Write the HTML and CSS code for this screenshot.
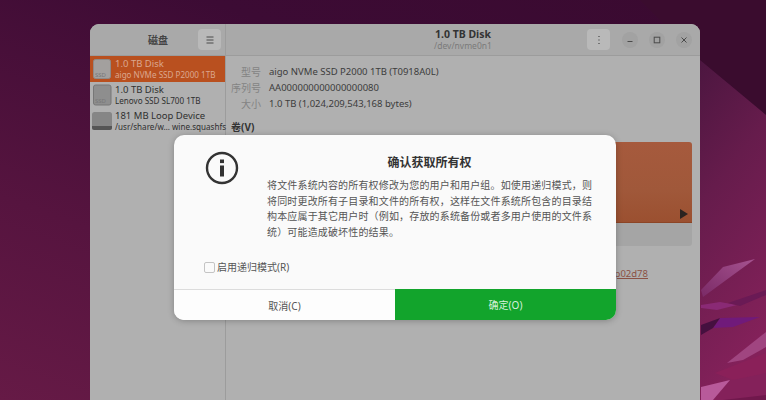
FILE: index.html
```html
<!DOCTYPE html>
<html lang="zh-CN">
<head>
<meta charset="utf-8">
<title>磁盘</title>
<link rel="stylesheet" href="styles.css">
</head>
<body>
<svg class="wallpaper" width="766" height="400" viewBox="0 0 766 400">
  <defs>
    <linearGradient id="rightBase" x1="0" y1="0" x2="0.25" y2="1">
      <stop offset="0" stop-color="#4c1640"/>
      <stop offset=".4" stop-color="#661c4c"/>
      <stop offset="1" stop-color="#84215a"/>
    </linearGradient>
    <linearGradient id="streak" x1="0" y1="1" x2="1" y2="0">
      <stop offset="0" stop-color="#7a2a66"/>
      <stop offset="1" stop-color="#a65390"/>
    </linearGradient>
  </defs>
  <polygon points="640,0 766,0 766,115 700,60" fill="#3a0c2e"/>
  <polygon points="700,60 766,115 766,400 700,400" fill="url(#rightBase)"/>
  <polygon points="701,290 723,267 755,259 733,275 703,297" fill="url(#streak)"/>
  <polygon points="701,305 720,302 737,305 717,310 701,308" fill="#8a2a75"/>
  <polygon points="728,303 766,290 766,295 740,306" fill="#6a1a55"/>
  <polygon points="720,318 760,317 733,327 713,328" fill="#701a7a"/>
  <polygon points="701,325 720,318 713,328 701,335" fill="#45103f"/>
  <polygon points="727,363 766,332 766,347 743,360" fill="#a04580"/>
  <polygon points="715,373 766,353 766,373 733,380" fill="#8a2059"/>
  <polygon points="701,387 730,380 713,400 701,400" fill="#b85a9a"/>
  <polygon points="723,400 766,395 766,400" fill="#70184c"/>
</svg>
<main class="window">
  <header class="titlebar">
    <div class="side-head">
      <span class="side-title">磁盘</span>
      <button class="tool-btn" aria-label="菜单">
        <svg width="10" height="8" viewBox="0 0 10 8"><path d="M1.5 1h7M1.5 4h7M1.5 7h7" stroke="#4a4a4a" stroke-width="1"/></svg>
      </button>
    </div>
    <div class="main-head">
      <div class="head-title"><strong>1.0 TB Disk</strong><span>/dev/nvme0n1</span></div>
      <button class="tool-btn kebab" aria-label="更多">
        <svg width="4" height="10" viewBox="0 0 4 10"><path d="M2 1v1M2 4.5v1M2 8v1" stroke="#444" stroke-width="1.2"/></svg>
      </button>
      <div class="win-ctrls">
        <span class="ctrl"><svg width="8" height="8" viewBox="0 0 8 8"><path d="M1.5 5.5h5" stroke="#4a4a4a" stroke-width="1"/></svg></span>
        <span class="ctrl"><svg width="8" height="8" viewBox="0 0 8 8"><rect x="1.2" y="1.2" width="5.6" height="5.6" fill="none" stroke="#4a4a4a" stroke-width="1"/></svg></span>
        <span class="ctrl"><svg width="8" height="8" viewBox="0 0 8 8"><path d="M1.5 1.5l5 5M6.5 1.5l-5 5" stroke="#4a4a4a" stroke-width="1"/></svg></span>
      </div>
    </div>
  </header>
  <div class="body">
    <aside class="sidebar">
      <div class="disk selected">
        <svg class="disk-icon" width="20" height="22" viewBox="0 0 20 22"><rect x="1.5" y="1.5" width="17" height="19" rx="2" fill="#a3a09e" stroke="#8f8a88"/><text x="3" y="19" class="ssd">SSD</text></svg>
        <div class="disk-text"><b>1.0 TB Disk</b><small>aigo NVMe SSD P2000 1TB</small></div>
      </div>
      <div class="disk">
        <svg class="disk-icon" width="20" height="22" viewBox="0 0 20 22"><rect x="1.5" y="1" width="17.5" height="20" rx="2" fill="#8e8e8e" stroke="#777"/><text x="3" y="19" class="ssd">SSD</text></svg>
        <div class="disk-text"><b>1.0 TB Disk</b><small>Lenovo SSD SL700 1TB</small></div>
      </div>
      <div class="disk">
        <svg class="disk-icon" width="20" height="22" viewBox="0 0 20 22"><rect x="0" y="2" width="20" height="18" rx="2.5" fill="#868686"/><path d="M0 16h20v1.5a2.5 2.5 0 0 1-2.5 2.5h-15A2.5 2.5 0 0 1 0 17.500z" fill="#555"/></svg>
        <div class="disk-text"><b>181 MB Loop Device</b><small>/usr/share/w… wine.squashfs</small></div>
      </div>
    </aside>
    <section class="content">
      <dl class="info">
        <dt>型号</dt><dd>aigo NVMe SSD P2000 1TB (T0918A0L)</dd>
        <dt>序列号</dt><dd>AA000000000000000080</dd>
        <dt>大小</dt><dd>1.0 TB (1,024,209,543,168 bytes)</dd>
      </dl>
      <h2 class="vol-head">卷(V)</h2>
      <div class="volume">
        <div class="vol-part"><svg width="9" height="10" viewBox="0 0 9 10"><path d="M1 0l8 5-8 5z" fill="#2c2320"/></svg></div>
        <div class="vol-tools"></div>
      </div>
      <div class="link-row"><a>/dev/disk/by-uuid/0f3a6c2e-71b4-4d19-a8e5-p02d78</a></div>
    </section>
  </div>
</main>
<div class="dialog" role="dialog">
  <div class="dlg-main">
    <svg class="dlg-icon" width="34" height="34" viewBox="0 0 34 34">
      <circle cx="17" cy="17" r="15" fill="none" stroke="#333" stroke-width="2.4"/>
      <rect x="15" y="14.500" width="4" height="11" fill="#333"/>
      <rect x="15" y="8.500" width="4" height="3.600" fill="#333"/>
    </svg>
    <div class="dlg-copy">
      <h1>确认获取所有权</h1>
      <p>将文件系统内容的所有权修改为您的用户和用户组。如使用递归模式，则<br>将同时更改所有子目录和文件的所有权，这样在文件系统所包含的目录结<br>构本应属于其它用户时（例如，存放的系统备份或者多用户使用的文件系<br>统）可能造成破坏性的结果。</p>
    </div>
  </div>
  <label class="check"><span class="box"></span>启用递归模式(R)</label>
  <div class="dlg-actions">
    <button class="cancel">取消(C)</button>
    <button class="ok">确定(O)</button>
  </div>
</div>
</body>
</html>
```
FILE: styles.css
```css
* { box-sizing: border-box; }
html, body { margin: 0; height: 400px; overflow: hidden; }
body {
  position: relative;
  width: 766px;
  font-family: "Noto Sans", "Noto Sans CJK SC", sans-serif;
  background: linear-gradient(20deg, #661a46 0%, #56143f 30%, #3c0b34 70%, #3a0a30 100%);
}
.wallpaper { position: absolute; left: 0; top: 0; }
.window {
  position: absolute;
  left: 90px;
  top: 24px;
  width: 610px;
  height: 376px;
  border-radius: 9px 9px 0 0;
  background: #b0b0b0;
  overflow: hidden;
  display: flex;
  flex-direction: column;
}
.titlebar { display: flex; height: 32px; flex: none; background: #a9a9a9; border-bottom: 1px solid #9c9c9c; }
.side-head { width: 136px; flex: none; display: flex; align-items: center; border-right: 1px solid #9c9c9c; padding: 0 4px 0 0; }
.side-title { flex: 1; text-align: center; font-size: 10px; font-weight: 700; color: #444; padding-left: 28px; }
.tool-btn {
  width: 23px; height: 21px; padding: 0; border: 0; border-radius: 4px;
  background: #b9b9b9; display: flex; align-items: center; justify-content: center;
}
.main-head { flex: 1; display: flex; align-items: center; padding-right: 8px; position: relative; }
.head-title { position: absolute; left: 0; right: 0; text-align: center; display: flex; flex-direction: column; line-height: 11px; }
.head-title strong { font-size: 10.5px; color: #333; }
.head-title span { font-size: 8.5px; color: #7a7a7a; }
.kebab { margin-left: auto; position: relative; margin-right: 12px; }
.win-ctrls { display: flex; gap: 11px; position: relative; }
.ctrl { width: 16px; height: 16px; border-radius: 50%; background: #a2a2a2; display: flex; align-items: center; justify-content: center; }
.body { flex: 1; display: flex; min-height: 0; }
.sidebar { width: 136px; flex: none; border-right: 1px solid #9c9c9c; background: #b0b0b0; }
.disk { height: 26px; display: flex; align-items: center; gap: 3px; padding-left: 2px; color: #2f2f2f; }
.disk.selected { background: #b9501f; color: #dba78e; }
.disk-icon { flex: none; }
.ssd { font: 6px "Noto Sans", sans-serif; fill: #777; }
.disk-text { display: flex; flex-direction: column; min-width: 0; white-space: nowrap; }
.disk-text b { font-weight: 400; font-size: 9.5px; line-height: 12px; }
.disk-text small { font-size: 8.1px; line-height: 10px; }
.content { flex: 1; padding: 8px 8px 0 5px; min-width: 0; }
.info { display: grid; grid-template-columns: 30px auto; column-gap: 8px; row-gap: 0; margin: 0; font-size: 9.5px; line-height: 16px; }
.info dt { text-align: right; color: #838383; white-space: nowrap; font-size: 10px; }
.info dd { margin: 0; color: #3c3c3c; }
.vol-head { margin: 8px 0 0; font-size: 10px; line-height: 14px; font-weight: 700; color: #333; }
.volume { margin-top: 8px; height: 104px; border-radius: 3px; background: #a5a5a5; overflow: hidden; display: flex; flex-direction: column; }
.vol-part { height: 81px; background: linear-gradient(#a65a3d, #a0583a 60%, #9b5030); border-bottom: 1px solid #8c4526; display: flex; align-items: flex-end; justify-content: flex-end; padding: 0 4px 3px 0; }
.vol-tools { flex: 1; }
.link-row { margin-top: 21px; padding-right: 44px; text-align: right; font-size: 9.5px; line-height: 14px; white-space: nowrap; }
.link-row a { color: #8b5245; text-decoration: underline; }
.dialog {
  position: absolute;
  left: 174px;
  top: 135px;
  width: 442px;
  height: 185px;
  border-radius: 10px;
  background: #fafafa;
  overflow: hidden;
  box-shadow: 0 1px 6px rgba(0,0,0,.25);
  display: flex;
  flex-direction: column;
}
.dlg-main { display: flex; padding: 16px 24px 0 31px; flex: 1; }
.dlg-icon { flex: none; margin-right: 28px; }
.dlg-copy { flex: 1; }
.dlg-copy h1 { margin: 4px 0 7px; font-size: 12px; line-height: 16px; text-align: center; color: #333; font-weight: 700; }
.dlg-copy p { margin: 0; font-size: 10px; line-height: 15.5px; letter-spacing: .16px; color: #555; white-space: nowrap; }
.check { display: flex; align-items: center; gap: 2px; padding: 0 0 15px 30px; font-size: 10px; line-height: 14px; color: #555; }
.box { width: 11px; height: 11px; border: 1px solid #c4c4c4; border-radius: 2px; background: #fafafa; }
.dlg-actions { display: flex; height: 31px; flex: none; border-top: 1px solid #dcdcdc; }
.dlg-actions button { border: 0; padding: 0; font: inherit; font-size: 10px; }
.cancel { width: 221px; background: #fdfdfd; color: #555; }
.ok { flex: 1; background: #12a42c; color: #d8f0db; margin-top: -1px; }
```
